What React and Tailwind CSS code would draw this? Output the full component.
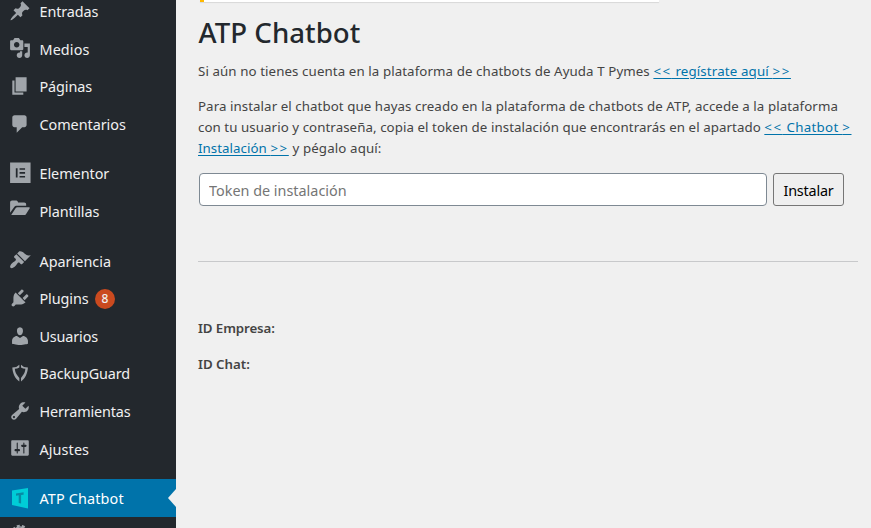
const ICONS = {
  post: 'M10.44 3.02l1.82-1.82 6.36 6.35-1.83 1.82c-1.05-.68-2.48-.57-3.41.36l-.75.75c-.92.93-1.04 2.35-.35 3.41l-1.83 1.82-2.41-2.41-2.8 2.79c-.42.42-3.38 2.71-3.8 2.29s1.86-3.39 2.28-3.81l2.79-2.79L4.1 9.36l1.83-1.82c1.05.69 2.48.57 3.4-.36l.75-.75c.93-.92 1.05-2.35.36-3.41z',
  media: 'M13 11V4c0-.55-.45-1-1-1h-1.67L9 1H5L3.67 3H2c-.55 0-1 .45-1 1v7c0 .55.45 1 1 1h10c.55 0 1-.45 1-1zM7 4.5c1.38 0 2.5 1.12 2.5 2.5S8.38 9.5 7 9.5 4.5 8.38 4.5 7 5.62 4.5 7 4.5zM14 6h5v10.5c0 1.38-1.12 2.5-2.5 2.5S14 17.88 14 16.5s1.12-2.5 2.5-2.5c.17 0 .34.02.5.05V9h-3V6zm-4 8.05V13h2v3.5c0 1.38-1.12 2.5-2.5 2.5S7 17.88 7 16.5 8.12 14 9.5 14c.17 0 .34.02.5.05z',
  page: 'M6 15V2h10v13H6zm-1 1h8v2H3V5h2v11z',
  comments: 'M5 2h9c1.1 0 2 .9 2 2v7c0 1.1-.9 2-2 2h-2l-5 5v-5H5c-1.1 0-2-.9-2-2V4c0-1.1.9-2 2-2z',
  elementor: 'M1 .5h18.6v18.6H1zM6.2 5.6v8.6h1.6V5.6zM9.6 5.6v1.5h5V5.6zM9.6 9.1v1.5h5V9.1zM9.6 12.7v1.5h5v-1.5z',
  folder: 'M1 12.6V3.2C1 2 1.7 1.3 2.8 1.3h3.4c.8 0 1.4.3 1.7 1l.4.9h5.5c1.1 0 1.8.7 1.8 1.7v1.3H7.3c-1.2 0-2 .4-2.7 1.3zM2 14.6l4-6.3c.4-.6.9-.9 1.6-.9h10.5c.7 0 1 .6.6 1.2l-3.3 5.2c-.4.6-.9.8-1.6.8z',
  appearance: 'M14.48 11.06L7.41 3.99l1.5-1.5c.5-.56 2.3-.47 3.51.32 1.21.8 1.43 1.28 2.91 2.1 1.18.64 2.45 1.26 4.45.85zm-.71.71L6.7 4.7 4.93 6.47c-.39.39-.39 1.02 0 1.41l1.06 1.06c.39.39.39 1.03 0 1.42-.6.6-1.43 1.11-2.21 1.69-.35.26-.7.53-1.01.84C1.43 14.23.4 16.08 1.4 17.07c.99 1 2.84-.03 4.18-1.36.31-.31.58-.66.85-1.02.57-.78 1.08-1.61 1.69-2.21.39-.39 1.02-.39 1.41 0l1.06 1.06c.39.39 1.02.39 1.41 0z',
  plugins: 'M13.11 4.36L9.87 7.6 8 5.73l3.24-3.24c.35-.34 1.05-.2 1.56.32.52.51.66 1.21.31 1.55zm-8 1.77l.91-1.12 9.01 9.01-1.19.84c-.71.71-2.63 1.16-3.82 1.16H6.14L4.9 17.26c-.59.59-1.54.59-2.12 0-.59-.58-.59-1.53 0-2.12l1.24-1.24v-3.88c0-1.13.4-3.19 1.09-3.89zm7.26 3.97l3.24-3.24c.34-.35 1.04-.21 1.55.31.52.51.66 1.21.31 1.55l-3.24 3.25z',
  users: 'M10 9.25c-2.27 0-2.73-3.44-2.73-3.44C7 4.02 7.82 2 9.97 2c2.16 0 2.98 2.02 2.71 3.81 0 0-.41 3.44-2.68 3.44zm0 2.57L12.72 10c2.39 0 4.52 2.33 4.52 4.53v2.49s-3.65 1.13-7.24 1.13c-3.65 0-7.24-1.13-7.24-1.13v-2.49c0-2.25 1.94-4.48 4.47-4.48z',
  shield: 'M9.4 2.6v2.5L7.4 6l-2.1.2c.2 2.700 1.200 4.900 3.200 7.200l.9 1.200v3.200C5.600 15.200 3.300 10.600 3 5.100l3.600-.6zM10.900 2.600l2.700 1.900 3.600.6c-.3 5.500-2.600 10.100-6.300 12.700v-3.200l.8-1.200c2-2.300 3-4.500 3.200-7.200L12.800 6l-1.900-.9z',
  tools: 'M16.68 9.77c-1.34 1.34-3.3 1.67-4.95.99l-5.41 6.52c-.99.99-2.59.99-3.58 0s-.99-2.59 0-3.57l6.52-5.42c-.68-1.65-.35-3.61.99-4.95 1.28-1.28 3.12-1.62 4.72-1.06l-2.89 2.89 2.82 2.82 2.86-2.87c.53 1.58.18 3.39-1.08 4.65zM3.81 16.21c.4.39 1.04.39 1.43 0 .4-.4.4-1.04 0-1.43-.39-.4-1.03-.4-1.43 0-.39.39-.39 1.03 0 1.43z',
  settings: 'M18 16V4c0-.55-.45-1-1-1H3c-.55 0-1 .45-1 1v12c0 .55.45 1 1 1h14c.55 0 1-.45 1-1zM8 11h1c.55 0 1 .45 1 1s-.45 1-1 1H8v1.5c0 .28-.22.5-.5.5s-.5-.22-.5-.5V13H6c-.55 0-1-.45-1-1s.45-1 1-1h1V5.5c0-.28.22-.5.5-.5s.5.22.5.5V11zm5-2h-1c-.55 0-1-.45-1-1s.45-1 1-1h1V5.5c0-.28.22-.5.5-.5s.5.22.5.5V7h1c.55 0 1 .45 1 1s-.45 1-1 1h-1v5.5c0 .28-.22.5-.5.5s-.5-.22-.5-.5V9z',
};

const GROUPS = [
  {
    gap: 'mb-[11.7px]',
    items: [
      ['post', 'Entradas', 'tracking-[-0.1px]'],
      ['media', 'Medios', 'tracking-[0.1px]'],
      ['page', 'Páginas', 'tracking-[-0.1px]'],
      ['comments', 'Comentarios', 'tracking-[-0.05px]'],
    ],
  },
  {
    gap: 'mb-[12.4px]',
    items: [
      ['elementor', 'Elementor', 'tracking-[-0.05px]'],
      ['folder', 'Plantillas', 'tracking-[-0.1px]'],
    ],
  },
  {
    gap: 'mb-[11px]',
    items: [
      ['appearance', 'Apariencia', 'tracking-[0px]'],
      ['plugins', 'Plugins', 'tracking-[-0.1px]', 8],
      ['users', 'Usuarios', 'tracking-[-0.15px]'],
      ['shield', 'BackupGuard', 'tracking-[-0.1px]'],
      ['tools', 'Herramientas', 'tracking-[-0.15px]'],
      ['settings', 'Ajustes', 'tracking-[0.1px]'],
    ],
  },
];

function Icon({ name }) {
  return (
    <svg viewBox="0 0 20 20" className="mb-[1.6px] h-[22px] w-[22px] shrink-0 fill-[#a0a5aa]">
      <path fillRule="evenodd" d={ICONS[name]} />
    </svg>
  );
}

function MenuItem({ icon, label, tracking, count }) {
  return (
    <li className="flex h-[37.6px] items-center gap-[8.5px] pl-[9px]">
      <Icon name={icon} />
      <span className={`pt-[0.8px] leading-5 ${tracking}`}>{label}</span>
      {count && (
        <span className="-ml-[2px] flex h-5 w-5 items-center justify-center rounded-full bg-[#ca4a1f] text-[12px] font-medium leading-none">
          {count}
        </span>
      )}
    </li>
  );
}

function Sidebar() {
  return (
    <nav className="h-[528px] w-[176px] shrink-0 overflow-hidden bg-[#23282d] text-[14.4px] text-[#f0f0f1]">
      <div className="-mt-[7.2px]">
        {GROUPS.map(({ gap, items }, i) => (
          <ul key={i} className={gap}>
            {items.map(([icon, label, tracking, count]) => (
              <MenuItem key={label} icon={icon} label={label} tracking={tracking} count={count} />
            ))}
          </ul>
        ))}
        <div className="flex h-[37.6px] items-center gap-[8.5px] bg-[#0073aa] pl-[9px] text-white">
          <svg viewBox="0 0 22 22" className="h-[22px] w-[22px] shrink-0">
            <path d="M3 3.600L19 1v20.500L3 18z" fill="#00cdd7" />
            <path d="M7 6.600L14.600 5.200v2.500l-2.500.4v8.400l-2.400-.4V8.300L7 8.700z" fill="#078ba5" />
          </svg>
          <span className="pt-[1.6px] leading-5 tracking-[0.15px]">ATP Chatbot</span>
          <svg viewBox="0 0 8 18" className="ml-auto h-[18px] w-2 fill-[#f0f0f0]">
            <path d="M8 0v18L0 9z" />
          </svg>
        </div>
        <div className="pl-[9px] pt-[6px]">
          <svg viewBox="0 0 22 22" className="h-[22px] w-[22px] fill-none stroke-[#a0a5aa]">
            <circle cx="11" cy="11" r="7" strokeWidth="1.500" />
            <circle cx="11" cy="11" r="8.300" strokeWidth="2" strokeDasharray="3 2.200" strokeDashoffset="0.800" />
          </svg>
        </div>
      </div>
    </nav>
  );
}

function Link({ children }) {
  return (
    <a href="#" className="text-[#0073aa] underline decoration-1 underline-offset-2">
      {children}
    </a>
  );
}

export default function App() {
  return (
    <div className="flex h-[528px] w-[871px] overflow-hidden bg-[#f0f0f0] font-['Noto_Sans','Open_Sans',sans-serif]">
      <Sidebar />
      <main className="flex-1 pl-[22px] text-[13.3px] leading-[21px] text-[#444]">
        <div className="ml-[2px] h-[2px] w-[459px] border-l-4 border-[#ffb900] bg-white shadow-[0_1px_1px_rgba(0,0,0,0.1)]" />
        <h1 className="mt-[12px] h-[36px] whitespace-nowrap pl-[0.5px] text-[27.6px] font-medium leading-[36px] tracking-[0.04px] text-[#23282d]">
          ATP Chatbot
        </h1>
        <p className="mt-[11px] whitespace-nowrap">
          <span className="tracking-[0.093px]">Si aún no tienes cuenta en la plataforma de chatbots de Ayuda T Pymes </span>
          <Link>
            <span className="tracking-[1.6px]">&lt;&lt;</span>
            <span className="tracking-[0.15px]"> regístrate aquí </span>
            <span className="tracking-[1.6px]">&gt;&gt;</span>
          </Link>
        </p>
        <p className="mt-[14px] whitespace-nowrap">
          <span className="tracking-[0.07px]">
            Para instalar el chatbot que hayas creado en la plataforma de chatbots de ATP, accede a la plataforma
          </span>
          <br />
          <span className="tracking-[0.067px]">
            con tu usuario y contraseña, copia el token de instalación que encontrarás en el apartado{' '}
          </span>
          <Link>
            <span className="tracking-[1.6px]">&lt;&lt;</span>
            <span className="tracking-[0.3px]"> Chatbot </span>
            <span className="tracking-[1.6px]">&gt;</span>
          </Link>
          <br />
          <Link>
            <span className="tracking-[0.05px]">Instalación </span>
            <span className="tracking-[1.6px]">&gt;&gt;</span>
          </Link>
          <span className="tracking-[0.13px]"> y pégalo aquí:</span>
        </p>
        <form className="ml-px mt-[14px] flex gap-[6px]">
          <input
            type="text"
            placeholder="Token de instalación"
            className="h-[33px] w-[568px] rounded-[4px] border border-[#7e8993] bg-white px-[9px] pt-[2px] text-[14.4px] placeholder:text-[#757575]"
          />
          <button
            type="button"
            className="h-[33px] w-[71px] rounded-[3px] border border-[#767676] bg-[#efefef] pt-[2px] text-[14.4px] tracking-[-0.2px] text-black"
          >
            Instalar
          </button>
        </form>
        <hr className="mt-[55px] w-[660px] border-t border-[#c8c9cb]" />
        <p className="mt-[56px] font-semibold tracking-[-0.1px]">ID Empresa:</p>
        <p className="mt-[15px] font-semibold">ID Chat:</p>
      </main>
    </div>
  );
}
